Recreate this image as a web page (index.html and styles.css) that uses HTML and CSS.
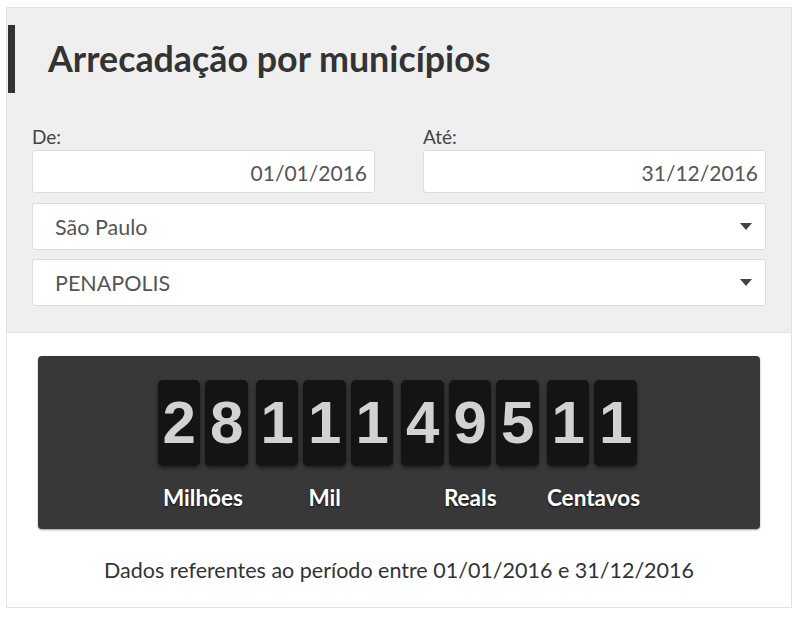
FILE: index.html
```html
<!DOCTYPE html>
<html lang="pt-BR">
<head>
    <meta charset="UTF-8">
    <meta name="viewport" content="width=device-width, initial-scale=1.0">
    <title>Arrecadação por municípios</title>
    <link rel="stylesheet" href="styles.css">
</head>
<body>
    <div class="card">
        <div class="card-head">
            <h2 class="title">Arrecadação por municípios</h2>

            <div class="dates">
                <div class="field">
                    <label>De:</label>
                    <div class="input">01/01/2016</div>
                </div>
                <div class="field">
                    <label>Até:</label>
                    <div class="input">31/12/2016</div>
                </div>
            </div>

            <div class="select">
                <span>São Paulo</span>
                <span class="arrow"></span>
            </div>
            <div class="select">
                <span>PENAPOLIS</span>
                <span class="arrow"></span>
            </div>
        </div>

        <div class="card-body">
            <div class="counter">
                <div class="groups">
                    <div class="group">
                        <div class="digits"><span>2</span><span>8</span></div>
                        <div class="unit"><span>Milhões</span></div>
                    </div>
                    <div class="group">
                        <div class="digits"><span>1</span><span>1</span><span>1</span></div>
                        <div class="unit"><span>Mil</span></div>
                    </div>
                    <div class="group">
                        <div class="digits"><span>4</span><span>9</span><span>5</span></div>
                        <div class="unit"><span>Reals</span></div>
                    </div>
                    <div class="group">
                        <div class="digits"><span>1</span><span>1</span></div>
                        <div class="unit"><span>Centavos</span></div>
                    </div>
                </div>
            </div>
            <p class="note">Dados referentes ao período entre 01/01/2016 e 31/12/2016</p>
        </div>
    </div>
</body>
</html>
```

FILE: styles.css
```css
body {
    margin: 0;
    padding: 7px 8px 0 6px;
    background: #fff;
    font-family: 'Lato', 'Open Sans', sans-serif;
    color: #333;
}
.card {
    width: 784px;
    border: 1px solid #e2e2e2;
}
.card-head {
    background: #efefef;
    padding: 17px 25px 26px 25px;
    border-bottom: 1px solid #e4e4e4;
}
.title {
    margin: 0 0 0 -24px;
    height: 68px;
    border-left: 7px solid #333;
    padding-left: 33px;
    font-size: 35.8px;
    font-weight: 700;
    line-height: 68px;
    color: #333;
}
.dates {
    display: flex;
    gap: 48px;
    margin-top: 32px;
}
.field {
    flex: 1;
}
.field label {
    display: block;
    font-size: 19px;
    line-height: 24px;
    color: #444;
    margin-bottom: 1px;
}
.input {
    height: 41px;
    background: #fff;
    border: 1px solid #dcdcdc;
    border-radius: 3px;
    text-align: right;
    padding-right: 7px;
    font-size: 21px;
    line-height: 43px;
    color: #555;
}
.select {
    display: flex;
    align-items: center;
    justify-content: space-between;
    height: 45px;
    margin-top: 10px;
    padding: 0 13px 0 22px;
    background: #fff;
    border: 1px solid #dcdcdc;
    border-radius: 3px;
    font-size: 21.5px;
    color: #555;
}
.select + .select {
    margin-top: 9px;
}
.arrow {
    width: 0;
    height: 0;
    border-left: 6px solid transparent;
    border-right: 6px solid transparent;
    border-top: 7px solid #444;
}
.card-body {
    padding: 23px 31px 0 31px;
}
.counter {
    height: 173px;
    background: #383838;
    border-radius: 4px;
    box-shadow: 0 1px 2px rgba(0, 0, 0, 0.4);
    display: flex;
    justify-content: center;
}
.groups {
    display: flex;
    gap: 8px;
    padding-top: 24px;
}
.group {
    display: flex;
    flex-direction: column;
}
.digits {
    display: flex;
    gap: 5px;
}
.digits span {
    width: 42.5px;
    height: 86px;
    background: #141414;
    border-radius: 5px;
    box-shadow: 0 2px 4px rgba(0, 0, 0, 0.5);
    color: #d2d2d2;
    font-family: 'Liberation Sans', Arial, sans-serif;
    font-weight: 700;
    font-size: 60px;
    line-height: 86px;
    text-align: center;
}
.unit {
    display: flex;
    justify-content: center;
    width: 100%;
    min-width: 0;
    margin-top: 18px;
}
.unit span {
    flex: none;
    white-space: nowrap;
    font-size: 22.5px;
    font-weight: 700;
    color: #fff;
    text-shadow: 0 1px 2px rgba(0, 0, 0, 0.7);
}
.note {
    margin: 0;
    padding: 28px 0 24px 0;
    text-align: center;
    font-size: 21.5px;
    color: #333;
}
```
